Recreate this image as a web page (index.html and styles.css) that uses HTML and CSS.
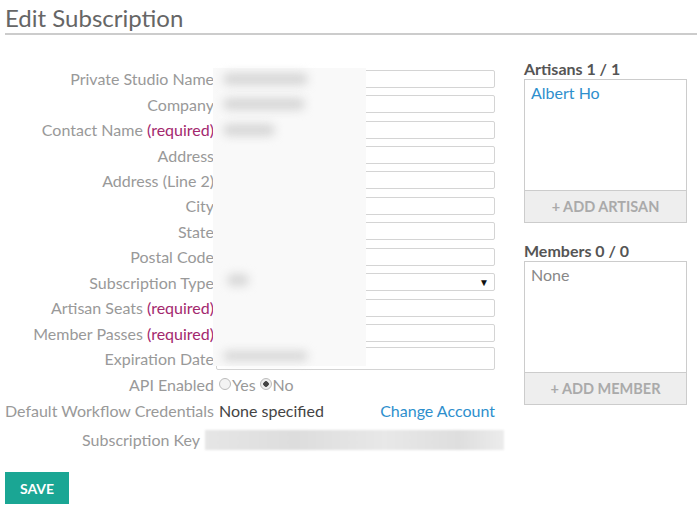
FILE: index.html
```html
<!DOCTYPE html>
<html>
<head>
<meta charset="utf-8">
<link rel="stylesheet" href="styles.css">
</head>
<body>
<h1 class="title">Edit Subscription</h1>
<div class="main">
  <div class="form">
    <div class="row"><label class="lbl">Private Studio Name</label><input class="inp" type="text"></div>
    <div class="row"><label class="lbl">Company</label><input class="inp" type="text"></div>
    <div class="row"><label class="lbl">Contact Name <span class="req">(required)</span></label><input class="inp" type="text"></div>
    <div class="row"><label class="lbl">Address</label><input class="inp" type="text"></div>
    <div class="row"><label class="lbl">Address (Line 2)</label><input class="inp" type="text"></div>
    <div class="row"><label class="lbl">City</label><input class="inp" type="text"></div>
    <div class="row"><label class="lbl">State</label><input class="inp" type="text"></div>
    <div class="row"><label class="lbl">Postal Code</label><input class="inp" type="text"></div>
    <div class="row"><label class="lbl">Subscription Type</label><div class="inp sel"><span class="arrow">&#9660;</span></div></div>
    <div class="row"><label class="lbl">Artisan Seats <span class="req">(required)</span></label><input class="inp" type="text"></div>
    <div class="row"><label class="lbl">Member Passes <span class="req">(required)</span></label><input class="inp" type="text"></div>
    <div class="row"><label class="lbl">Expiration Date</label><input class="inp tall" type="text"></div>
    <div class="row row-api"><label class="lbl">API Enabled</label>
      <div class="radios"><span class="radio"></span><span>Yes</span><span class="radio on"></span><span>No</span></div>
    </div>
    <div class="row row-api"><label class="lbl">Default Workflow Credentials</label>
      <div class="creds"><span class="none">None specified</span><a class="link">Change Account</a></div>
    </div>
    <div class="row row-key"><label class="lbl key-lbl">Subscription Key</label><div class="keybar"></div></div>

    <div class="blur">
      <span class="blob b1"></span>
      <span class="blob b2"></span>
      <span class="blob b3"></span>
      <span class="blob b4"></span>
      <span class="blob b5"></span>
    </div>
  </div>
  <div class="side">
    <div class="side-h">Artisans 1 / 1</div>
    <div class="list">
      <div class="list-body"><span class="person">Albert Ho</span></div>
      <div class="add">+ ADD ARTISAN</div>
    </div>
    <div class="side-h second">Members 0 / 0</div>
    <div class="list">
      <div class="list-body"><span class="none-gray">None</span></div>
      <div class="add">+ ADD MEMBER</div>
    </div>
  </div>
</div>
<button class="save">SAVE</button>
</body>
</html>
```
FILE: styles.css
```css
body {
  margin: 0;
  font-family: Lato, "Open Sans", sans-serif;
  background: #fff;
  width: 697px;
  height: 508px;
  overflow: hidden;
}
.title {
  margin: 0 0 0 5px;
  padding-top: 2px;
  font-size: 24px;
  font-weight: 400;
  line-height: 31px;
  color: #666;
  border-bottom: 2px solid #ccc;
}
.main {
  display: flex;
  padding-left: 5px;
}
.form {
  position: relative;
  width: 499px;
  margin-top: 31px;
}
.row {
  display: flex;
  align-items: center;
  height: 25.45px;
}
.lbl {
  width: 209px;
  text-align: right;
  font-size: 16px;
  color: #999;
  white-space: nowrap;
  padding-right: 2px;
}
.req { color: #a3286e; }
.inp {
  box-sizing: border-box;
  width: 279px;
  height: 18px;
  border: 1px solid #d4d4d4;
  border-radius: 2px;
  background: #fff;
  margin: 0;
  padding: 0;
}
.tall { height: 23px; }
.sel {
  display: flex;
  align-items: center;
  justify-content: flex-end;
  padding-right: 5px;
}
.arrow { font-size: 10px; color: #111; }
.row-api { height: 26px; }
.radios {
  display: flex;
  align-items: center;
  font-size: 16px;
  color: #999;
  padding-left: 3px;
}
.radio {
  box-sizing: border-box;
  width: 12px;
  height: 12px;
  border: 1px solid #bbb;
  border-radius: 50%;
  background: #f3f3f3;
  margin-right: 1px;
  margin-left: 2px;
}
.radio:first-child { margin-left: 0; }
.radio.on {
  margin-left: 4px;
  background: radial-gradient(circle, #444 0 2.5px, #eee 3px);
}
.creds {
  box-sizing: border-box;
  display: flex;
  justify-content: space-between;
  width: 279px;
  padding-left: 3px;
  font-size: 16px;
}
.none { color: #444; }
.link { color: #2e8fcd; }
.row-key { height: 31px; margin-top: 1px; }
.key-lbl { width: 195px; }
.keybar {
  width: 299px;
  height: 20px;
  margin-left: 3px;
  background: linear-gradient(90deg, #e6e6e6, #ddd 30%, #e8e8e8 60%, #dedede 85%, #ececec);
  filter: blur(1px);
}
.blur {
  position: absolute;
  left: 208px;
  top: 2px;
  width: 153px;
  height: 298px;
  background: #f9f9f9;
}
.blob {
  position: absolute;
  height: 12px;
  border-radius: 6px;
  background: #d6d6d6;
  filter: blur(5px);
}
.b1 { left: 10px; top: 5px; width: 85px; }
.b2 { left: 10px; top: 30px; width: 82px; }
.b3 { left: 10px; top: 56px; width: 52px; }
.b4 { left: 14px; top: 206px; width: 22px; }
.b5 { left: 10px; top: 283px; width: 85px; height: 10px; }
.side {
  margin-left: 20px;
  width: 163px;
  margin-top: 24px;
}
.side-h {
  font-size: 16px;
  font-weight: 700;
  color: #555;
  line-height: 20px;
}
.second { margin-top: 18px; }
.list {
  border: 1px solid #ccc;
  display: flex;
  flex-direction: column;
}
.list-body {
  box-sizing: border-box;
  height: 110px;
  padding: 3px 6px;
  font-size: 16px;
}
.person { color: #2e8fcd; }
.none-gray { color: #888; }
.add {
  height: 31px;
  border-top: 1px solid #ccc;
  background: #eee;
  color: #aaa;
  font-size: 14.5px;
  font-weight: 700;
  display: flex;
  align-items: center;
  justify-content: center;
}
.save {
  display: block;
  margin: 17px 0 0 5px;
  width: 64px;
  height: 32px;
  border: 0;
  background: #1aa694;
  color: #fff;
  font-family: Lato, sans-serif;
  font-weight: 700;
  font-size: 14px;
  padding: 0;
}
```
